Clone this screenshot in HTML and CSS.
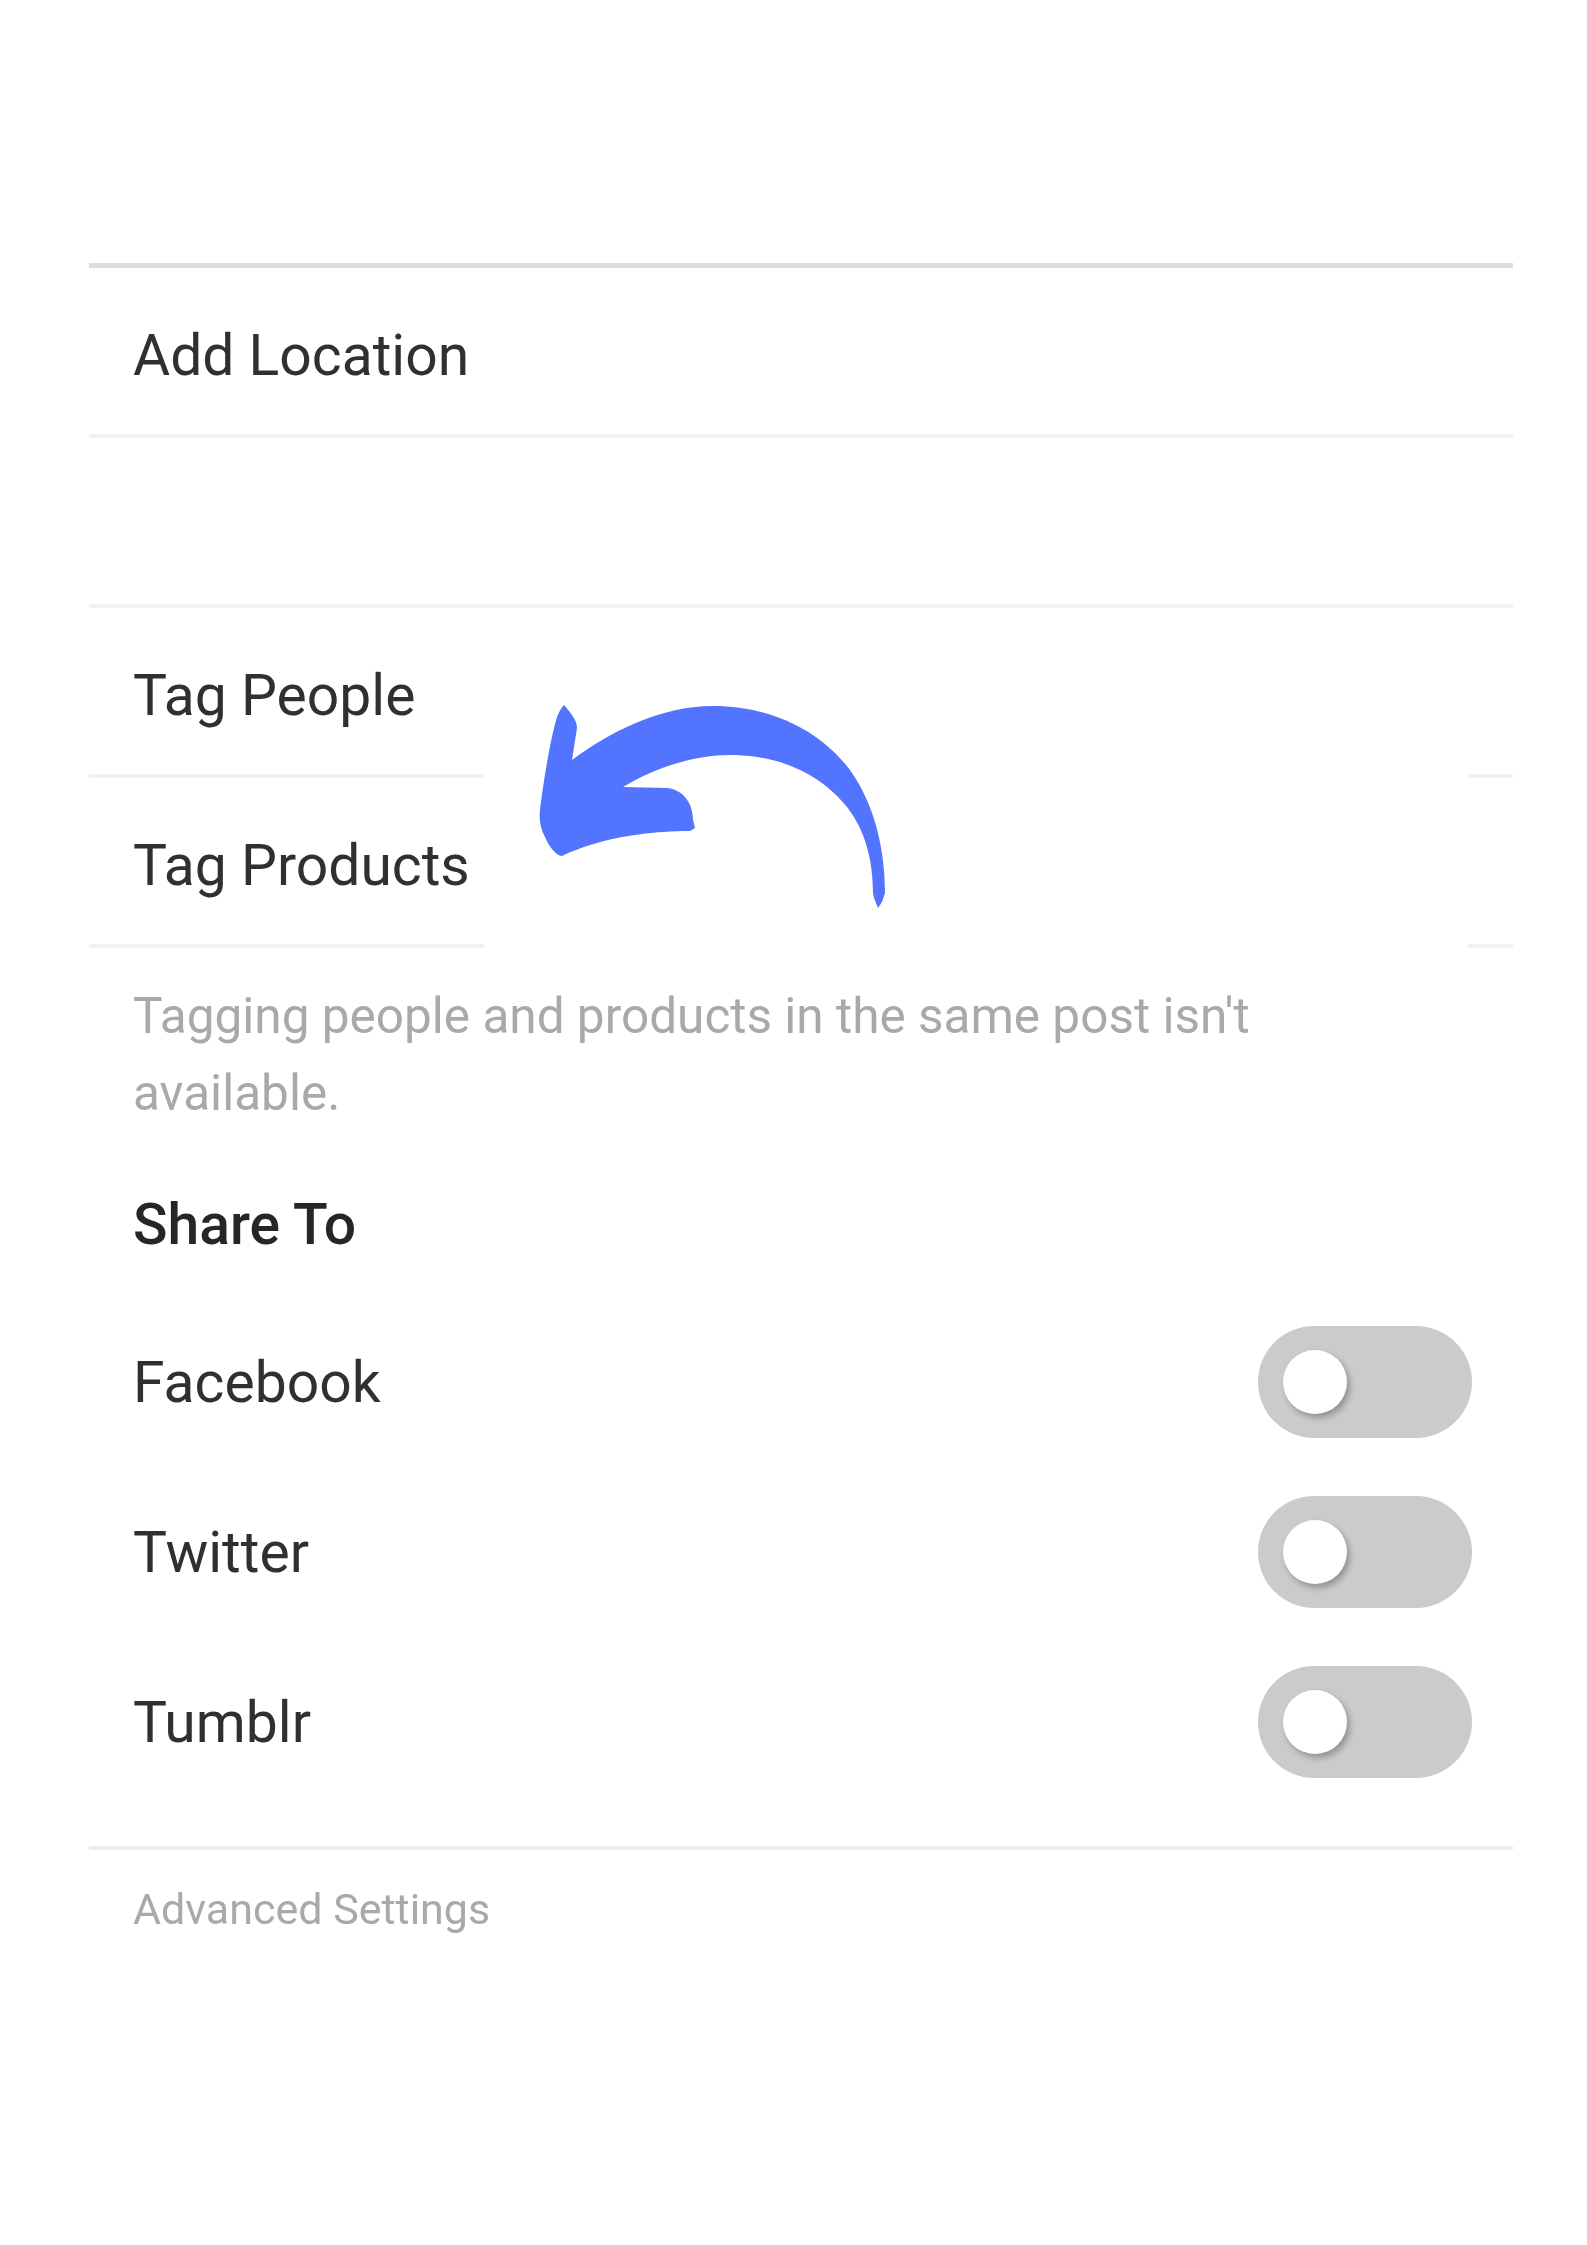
FILE: index.html
```html
<!DOCTYPE html>
<html>
<head>
<meta charset="utf-8">
<link rel="stylesheet" href="styles.css">
</head>
<body>
<div class="screen">
  <div class="rule rule-top"></div>
  <div class="row"><span class="label">Add Location</span></div>
  <div class="rule"></div>
  <div class="row row-empty"></div>
  <div class="rule"></div>
  <div class="row"><span class="label">Tag People</span></div>
  <div class="rule"></div>
  <div class="row"><span class="label">Tag Products</span></div>
  <div class="rule"></div>
  <p class="note">Tagging people and products in the same post isn't available.</p>
  <h2 class="section">Share To</h2>
  <div class="share-row"><span class="label">Facebook</span><span class="toggle"><span class="knob"></span></span></div>
  <div class="share-row"><span class="label">Twitter</span><span class="toggle"><span class="knob"></span></span></div>
  <div class="share-row"><span class="label">Tumblr</span><span class="toggle"><span class="knob"></span></span></div>
  <div class="rule rule-bottom"></div>
  <div class="advanced">Advanced Settings</div>

  <div class="arrow-card">
    <svg class="arrow" viewBox="530 695 370 225" width="370" height="225" xmlns="http://www.w3.org/2000/svg">
      <path fill="#5374fe" d="M564,705 C570,712 577,720 577,728 L572,760 C610,732 660,706 713,706 C770,706 820,730 850,770 C875,805 885,850 885,893 L882,902 L878,908 L874,898 L873,893 C873,860 865,830 847,807 C825,780 790,757 735,755 C700,754 660,765 623,787 L667,788 C685,790 693,805 693,820 L695,828 L690,831 C655,831 620,836 597,843 C580,848 570,852 562,856 C556,856 548,845 545,837 C540,828 539,818 540,810 C543,785 550,740 557,717 C559,712 561,708 564,705 Z"/>
    </svg>
  </div>
</div>
</body>
</html>
```
FILE: styles.css
```css
html, body {
  margin: 0;
  padding: 0;
  background: #ffffff;
}
body {
  width: 1587px;
  height: 2245px;
  font-family: Roboto, "Liberation Sans", Arial, sans-serif;
  color: #333333;
  overflow: hidden;
}
.screen {
  position: relative;
  margin-left: 89px;
  width: 1424px;
  padding-top: 263px;
}
.rule {
  height: 4px;
  background: #f1f1f1;
}
.rule-top {
  height: 5px;
  background: #dddddd;
}
.rule-bottom {
  margin-top: 39px;
  background: #eeeeee;
}
.row {
  box-sizing: border-box;
  height: 166px;
  display: flex;
  align-items: center;
  padding-left: 44px;
  padding-top: 8px;
}
.row-empty {
  height: 166px;
}
.label {
  font-size: 57px;
  color: #303030;
  filter: blur(0.6px);
}
.note {
  margin: 30px 0 0 0;
  padding-left: 44px;
  font-size: 49.5px;
  line-height: 77px;
  color: #a9a9a9;
  width: 1160px;
  filter: blur(0.6px);
}
.section {
  margin: 53px 0 0 0;
  padding-left: 44px;
  font-size: 57px;
  line-height: 80px;
  font-weight: 500;
  color: #262626;
  filter: blur(0.6px);
}
.share-row {
  height: 170px;
  display: flex;
  align-items: center;
  justify-content: space-between;
  padding-left: 44px;
  padding-right: 41px;
}
.section + .share-row {
  margin-top: 32px;
}
.toggle {
  position: relative;
  width: 214px;
  height: 112px;
  border-radius: 56px;
  background: #cbcbcd;
  display: block;
  filter: blur(0.6px);
}
.knob {
  position: absolute;
  left: 25px;
  top: 24px;
  width: 64px;
  height: 64px;
  border-radius: 50%;
  background: #ffffff;
  box-shadow: 3px 4px 6px rgba(0, 0, 0, 0.28);
}
.advanced {
  padding: 29px 0 0 44px;
  font-size: 43px;
  line-height: 60px;
  color: #a9a9a9;
  filter: blur(0.6px);
}
.arrow-card {
  position: absolute;
  left: 395px;
  top: 700px;
  width: 984px;
  height: 260px;
  background: #ffffff;
}
.arrow {
  position: absolute;
  left: 46px;
  top: -5px;
}
```
